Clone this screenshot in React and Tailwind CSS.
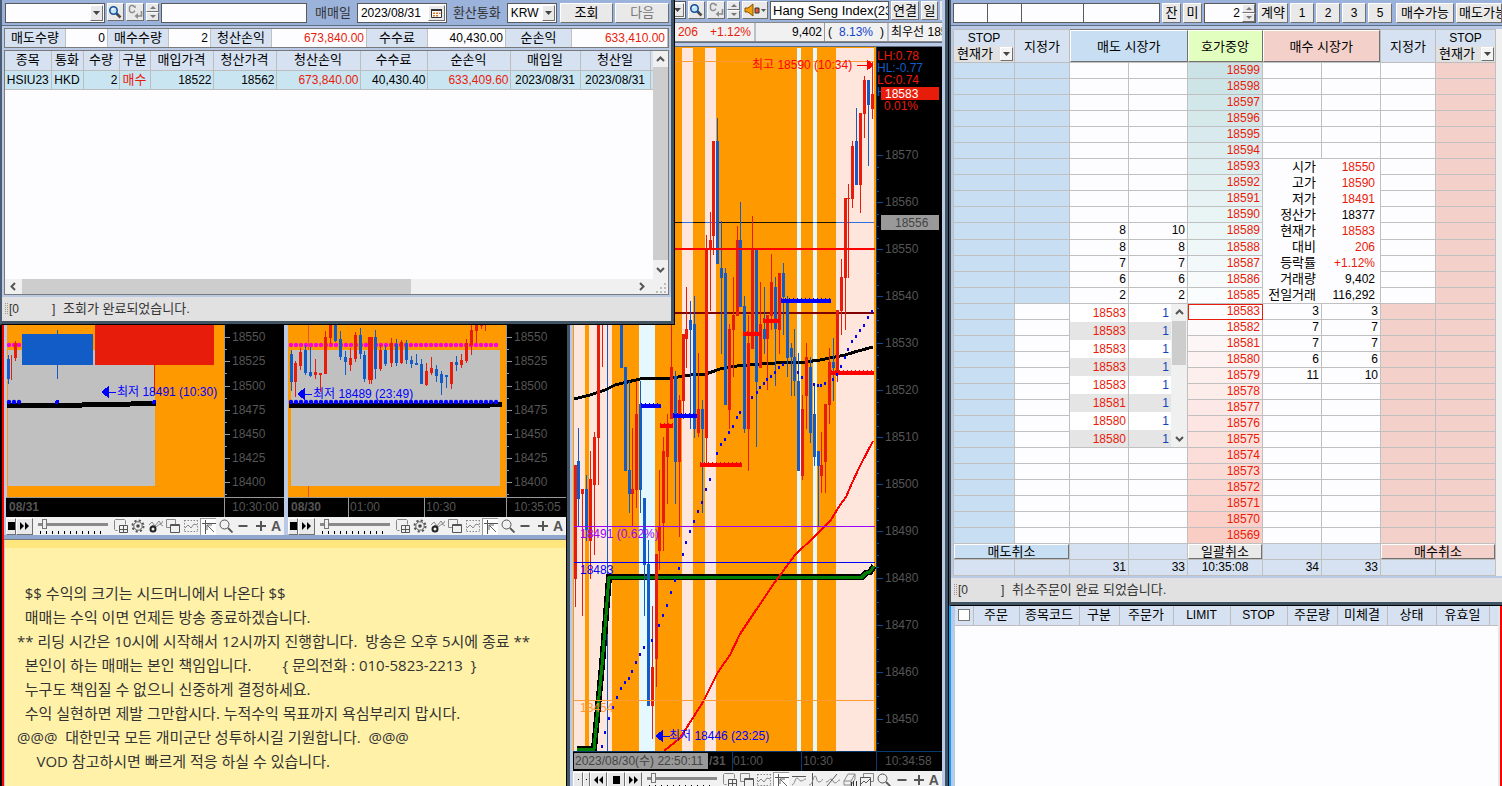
import { Fragment } from 'react';

const RED = '#e81c0a';
const BLUE = '#125cc8';

// [x, high, low, bodyTop, bodyBottom, up]
const MAIN_CANDLES = [
  [575, 465, 607, 465, 579, 1], [578, 428, 526, 461, 499, 0], [582, 489, 616, 489, 494, 1],
  [586, 475, 541, 489, 530, 0], [590, 451, 579, 479, 541, 1], [594, 432, 555, 437, 485, 1],
  [598, 300, 485, 300, 438, 1], [602, 300, 367, 300, 300, 1], [621, 300, 368, 300, 368, 0],
  [625, 367, 471, 367, 471, 0], [629, 381, 513, 470, 494, 0], [632, 428, 527, 489, 494, 1],
  [636, 381, 508, 414, 490, 1], [640, 381, 513, 404, 490, 0], [644, 498, 616, 498, 565, 0],
  [648, 540, 706, 564, 706, 0], [652, 606, 739, 667, 706, 1], [656, 554, 687, 554, 659, 1],
  [659, 470, 570, 526, 551, 1], [663, 437, 551, 451, 523, 1], [667, 414, 504, 426, 457, 1],
  [671, 310, 419, 367, 419, 1], [675, 371, 504, 376, 462, 0], [679, 395, 537, 400, 462, 1],
  [683, 334, 419, 334, 401, 1], [686, 287, 368, 329, 339, 1], [690, 301, 429, 320, 330, 0],
  [694, 296, 438, 324, 429, 0], [698, 353, 437, 409, 433, 1], [702, 400, 513, 409, 429, 0],
  [706, 235, 463, 249, 438, 1], [710, 212, 311, 240, 249, 1], [713, 141, 255, 141, 236, 1],
  [717, 118, 264, 141, 264, 0], [721, 221, 354, 268, 278, 0], [725, 268, 405, 273, 405, 0],
  [729, 324, 429, 329, 410, 1], [733, 277, 377, 315, 330, 1], [737, 226, 316, 240, 316, 1],
  [740, 202, 307, 240, 307, 0], [744, 296, 433, 306, 429, 0], [748, 315, 471, 343, 429, 1],
  [752, 216, 349, 249, 349, 1], [756, 249, 447, 249, 382, 0], [760, 282, 368, 324, 368, 1],
  [764, 287, 354, 329, 339, 0], [767, 315, 390, 315, 339, 1], [771, 254, 330, 282, 316, 1],
  [775, 277, 386, 287, 329, 0], [779, 273, 354, 273, 330, 1], [783, 263, 335, 273, 297, 0],
  [787, 296, 377, 301, 358, 0], [791, 343, 396, 348, 357, 0], [794, 329, 396, 357, 381, 0],
  [798, 353, 471, 381, 471, 0], [802, 395, 480, 409, 476, 1], [806, 343, 429, 357, 396, 1],
  [810, 357, 443, 367, 433, 0], [814, 384, 466, 414, 457, 0], [818, 451, 526, 451, 466, 0],
  [821, 432, 493, 465, 476, 1], [825, 404, 493, 404, 462, 1], [829, 348, 424, 362, 405, 1],
  [833, 338, 401, 362, 368, 0], [837, 310, 382, 310, 375, 1], [841, 259, 335, 277, 311, 1],
  [845, 198, 330, 198, 278, 1], [848, 184, 278, 198, 199, 1], [852, 141, 208, 146, 199, 1],
  [856, 108, 185, 141, 185, 0], [860, 113, 213, 113, 185, 1], [864, 76, 138, 80, 114, 1],
  [868, 80, 166, 80, 105, 0], [872, 62, 119, 94, 109, 1],
];

const BANDS = [
  [574, 11, 'p'], [589, 23, 'p'], [639, 16, 'c'], [682, 11, 'p'], [705, 11, 'p'],
  [797, 4, 'c'], [813, 4, 'c'], [836, 38, 'p'],
];

const SAR = [
  [602, 746], [605, 732], [609, 718], [613, 707], [617, 697], [621, 688], [625, 682], [629, 678],
  [632, 671], [636, 662], [640, 654], [644, 647], [652, 640], [659, 625], [663, 615], [667, 605],
  [671, 592], [675, 580], [679, 568], [683, 554], [686, 542], [690, 531], [694, 521], [698, 511],
  [702, 502], [706, 489], [710, 479], [717, 453], [721, 444], [725, 439], [729, 432], [733, 426],
  [737, 417], [740, 412], [752, 397], [757, 392], [760, 387], [764, 383], [767, 379], [771, 376],
  [775, 372], [779, 367], [783, 364], [798, 372], [802, 377], [814, 384], [818, 385], [821, 385],
  [825, 383], [833, 379], [837, 374], [841, 366], [845, 357], [848, 349], [852, 341], [856, 336],
  [860, 330], [864, 325], [868, 317], [872, 311],
];

const LEVELS = [
  [641, 661, 406, 'b'], [660, 673, 426, 'r'], [673, 697, 416, 'b'], [700, 742, 465, 'r'],
  [743, 761, 334, 'r'], [763, 780, 321, 'r'], [781, 831, 301, 'b'], [831, 874, 373, 'r'],
];

const SUB_CANDLES = [
  [291, 350, 391, 354, 382, 0], [295, 361, 397, 363, 382, 1], [300, 348, 370, 352, 366, 1],
  [305, 345, 375, 350, 373, 0], [310, 347, 377, 372, 376, 0], [315, 359, 379, 372, 375, 1],
  [320, 373, 392, 373, 375, 1], [325, 331, 374, 337, 374, 1], [330, 310, 344, 310, 338, 1],
  [335, 310, 342, 310, 341, 0], [340, 331, 360, 339, 357, 0], [345, 351, 375, 357, 362, 0],
  [350, 348, 371, 358, 365, 1], [355, 332, 362, 335, 359, 1], [360, 328, 359, 335, 354, 0],
  [364, 351, 382, 355, 379, 0], [369, 337, 384, 337, 380, 1], [371, 337, 384, 337, 380, 1],
  [375, 330, 379, 337, 369, 0], [380, 345, 371, 350, 369, 1], [385, 345, 366, 350, 364, 0],
  [391, 338, 367, 343, 363, 1], [396, 339, 366, 344, 363, 0], [401, 340, 364, 342, 363, 1],
  [406, 340, 364, 343, 360, 0], [411, 356, 368, 360, 364, 0], [416, 354, 365, 363, 365, 0],
  [421, 359, 384, 364, 384, 0], [426, 363, 386, 371, 385, 1], [431, 357, 375, 368, 373, 1],
  [436, 365, 382, 369, 376, 0], [441, 371, 395, 374, 383, 0], [446, 375, 388, 375, 377, 0],
  [451, 362, 389, 362, 384, 1], [456, 356, 371, 362, 365, 0], [461, 354, 368, 360, 365, 1],
  [466, 339, 363, 343, 361, 1], [471, 310, 355, 330, 345, 1], [476, 310, 343, 310, 331, 1],
  [481, 310, 329, 310, 326, 1], [485, 310, 331, 310, 320, 1],
];

const SUB_AXIS = [[18550, 337], [18525, 361], [18500, 386], [18475, 410], [18450, 434], [18425, 458], [18400, 482]];

const UPPER = Array.from({ length: 15 }, (_, i) => 18599 - i);
const LOWER = Array.from({ length: 15 }, (_, i) => 18583 - i);
const SELL = { 18589: [8, 10], 18588: [8, 8], 18587: [7, 7], 18586: [6, 6], 18585: [2, 2] };
const BUY = { 18583: [3, 3], 18582: [7, 7], 18581: [7, 7], 18580: [6, 6], 18579: [11, 10] };
const INFO = [
  ['시가', '18550', 1], ['고가', '18590', 1], ['저가', '18491', 1], ['정산가', '18377', 0],
  ['현재가', '18583', 1], ['대비', '206', 1], ['등락률', '+1.12%', 1], ['거래량', '9,402', 0],
  ['전일거래', '116,292', 0],
];
const TICKS = [18583, 18583, 18583, 18583, 18583, 18581, 18580, 18580];

const NOTES = [
  '  $$ 수익의 크기는 시드머니에서 나온다 $$',
  '  매매는 수익 이면 언제든 방송 종료하겠습니다.',
  '** 리딩 시간은 10시에 시작해서 12시까지 진행합니다.  방송은 오후 5시에 종료 **',
  '  본인이 하는 매매는 본인 책임입니다.        { 문의전화 : 010-5823-2213  }',
  '  누구도 책임질 수 없으니 신중하게 결정하세요.',
  '  수익 실현하면 제발 그만합시다. 누적수익 목표까지 욕심부리지 맙시다.',
  '@@@  대한민국 모든 개미군단 성투하시길 기원합니다.  @@@',
  '     VOD 참고하시면 빠르게 적응 하실 수 있습니다.',
];

const EDGE = 'shrink-0 border border-t-white border-l-white border-r-[#707070] border-b-[#707070] overflow-hidden whitespace-nowrap';
const RAISED = `${EDGE} bg-[#e9e9e9]`;
const FIELD = 'border border-[#5a5a5a] bg-[#fdfdff] min-w-0';

function Candles({ data }) {
  return data.map(([x, hi, lo, top, bot, up], i) => (
    <g key={i} fill={up ? RED : BLUE}>
      <rect x={x} y={hi} width="1" height={lo - hi} />
      <rect x={x - 1} y={top} width="3" height={bot - top} />
    </g>
  ));
}

function Down() {
  return (
    <svg viewBox="0 0 7 4" className="w-[7px] h-1" fill="#444">
      <path d="M0 0h7L3.500 4z" />
    </svg>
  );
}

function DropDown({ label, options, className, button = 'bg-[#e9e9e9]' }) {
  return (
    <div className={`relative flex shrink-0 ${className}`}>
      <select aria-label={label} className="w-full h-full appearance-none pl-[3px] pr-3 bg-transparent outline-none">
        {options.map((o) => <option key={o}>{o}</option>)}
      </select>
      <span className={`absolute right-px top-px bottom-px flex items-center justify-center pointer-events-none w-[13px] ${EDGE} ${button}`}>
        <Down />
      </span>
    </div>
  );
}

function SearchButton() {
  return (
    <button aria-label="검색" className={`w-[17px] h-[18px] ${RAISED}`}>
      <svg viewBox="0 0 14 14" className="w-[14px] h-[14px]">
        <circle cx="5.500" cy="5.500" r="3.700" fill="#bfe6f8" stroke="#1b4f96" strokeWidth="1.600" />
        <path d="M4 4.500L6 3.500" stroke="#fff" strokeWidth="1.200" />
        <path d="M8.500 8.500L12.500 12.500" stroke="#5b4a3a" strokeWidth="2.600" />
        <path d="M8.500 8.500L10 10" stroke="#1b4f96" strokeWidth="2" />
      </svg>
    </button>
  );
}

function ClearButton() {
  return (
    <button aria-label="이전 종목" className={`w-[18px] h-[18px] ${RAISED}`}>
      <svg viewBox="0 0 16 16" className="w-4 h-4" fill="none" stroke="#8c8c8c">
        <path d="M8 4V2.500H7L6 1.500H4L2.500 3v4L4 8.500h2L7.500 7.500V6.500" strokeWidth="1.400" />
        <path d="M14.500 7v5H10" strokeWidth="1.600" />
        <path d="M11 9v6L7.500 12z" fill="#8c8c8c" stroke="none" />
      </svg>
    </button>
  );
}

function Spin() {
  return (
    <span className="flex flex-col shrink-0 w-[13px] h-[18px]">
      {['위로', '아래로'].map((name, i) => (
        <button key={name} aria-label={name} className={`flex flex-1 items-center justify-center ${RAISED}`}>
          <svg viewBox="0 0 6 3" className="w-[6px] h-[3px]" fill="#777">
            <path d={i ? 'M0 0h6L3 3z' : 'M0 3h6L3 0z'} />
          </svg>
        </button>
      ))}
    </span>
  );
}

const ICONS = {
  addWindow: <><path d="M3.500 11.500h-2l-1-1V1.500l1-1h9l1 1v4" /><path d="M5.500 6.500h8v7h-8zM9.500 6.500v7M5.500 10.500h8" stroke="#555" /></>,
  gear: <><circle cx="7" cy="7" r="5.500" strokeWidth="2" strokeDasharray="2.160 2.160" stroke="#555" /><circle cx="7" cy="7" r="4.200" stroke="#666" /><circle cx="7" cy="7" r="1" strokeWidth="1.600" stroke="#444" /></>,
  chartGear: <><path d="M0 6l3-3 3 4 4-5 2 3 2-3M1 9l3-3 3 2 4-3 3 2" /><circle cx="4" cy="10" r="2.500" stroke="#222" strokeWidth="2" /></>,
  windows: <><path d="M4 8.500H.5v-8h9V5" /><path d="M4.500 5.500h9v8h-9zM4.500 6.500h9" stroke="#555" /></>,
  frame: <><path d="M.5 1.500h13M.5 12.500h13M.5 1v12M13.500 1v12" strokeDasharray="1.500 1.500" /><path d="M1 9l3-3 3 3 3-4 3 1" /></>,
  cursor: <><path d="M3.500 0v14M0 3.500h14" stroke="#555" /><path d="M12 12L5 5M5 10V5h5" stroke="#666" /></>,
  ceiling: <><path d="M0 3.500h14" stroke="#555" /><path d="M0 12c3-1 3-7 5-7s2 3 4 3 3-2 5-2" /></>,
  vline: <><path d="M3.500 0v14" stroke="#555" /><path d="M0 12c4 0 4-9 6-9s1 6 4 6 3-3 4-3" /></>,
  pen: <><path d="M1 13L11 1" stroke="#555" /><path d="M0 9c3 0 3-3 5-3s2 4 4 4 3-3 5-3" /></>,
  eraser: <><path d="M1 8l4-7h7L8 8zM1 8v4h7V8M8 12l4-6V1" /><path d="M8.500 9v5M10.500 8v6M13.500 8v6" stroke="#333" /></>,
  stack: <><path d="M3.500 4V.5h10v8H11" /><path d="M.5 4.500h10v9H.5z" stroke="#555" /><path d="M1 11l3-3 2 2 4-4" stroke="#555" /></>,
  zoom: <><circle cx="5.500" cy="5.500" r="4.500" stroke="#555" /><path d="M9 9l4.500 4.500" stroke="#555" strokeWidth="1.800" /></>,
  minus: <path d="M2.500 7h9" stroke="#555" strokeWidth="2" />,
  plus: <path d="M2 7h10M7 2v10" stroke="#555" strokeWidth="2" />,
};
const SUB_TOOLS = ['addWindow', 'gear', 'chartGear', 'windows', 'frame', 'cursor', 'zoom', 'minus', 'plus'];
const MAIN_TOOLS = ['addWindow', 'windows', 'frame', 'cursor', 'ceiling', 'vline', 'pen', 'eraser', 'stack', 'zoom', 'minus', 'plus'];

function PlayButton({ name, d, className }) {
  return (
    <button aria-label={name} className={`flex items-center justify-center h-[17px] ${RAISED} ${className}`}>
      <svg viewBox="0 0 9 8" className="w-[9px] h-2 shrink-0"><path d={d} /></svg>
    </button>
  );
}

function ChartTools({ tools, full }) {
  return (
    <div className="flex items-center h-[18px] bg-[#f1f1f1] pr-[2px]">
      {full && (
        <>
          <PlayButton name="처음" d="M4 3h1v1H4z" className="w-[10px]" />
          <PlayButton name="이전" d="M4 3h1v1H4z" className="w-[7px]" />
          <PlayButton name="되감기" d="M4 0v8L0 4zM9 0v8L5 4z" className="w-[17px]" />
        </>
      )}
      <PlayButton name="정지" d="M1 0h7v8H1z" className={full ? 'w-[18px]' : 'w-[10px]'} />
      <PlayButton name="빨리 감기" d="M0 0v8l4-4zM5 0v8l4-4z" className="w-[17px]" />
      <div className="flex flex-col mx-[5px] w-[70px] shrink-0">
        <input
          type="range"
          aria-label="재생 속도"
          defaultValue="6"
          className="appearance-none w-full h-3 bg-transparent [&::-webkit-slider-runnable-track]:h-[3px] [&::-webkit-slider-runnable-track]:bg-[#8a8a8a] [&::-webkit-slider-thumb]:appearance-none [&::-webkit-slider-thumb]:w-[5px] [&::-webkit-slider-thumb]:h-[10px] [&::-webkit-slider-thumb]:-mt-1 [&::-webkit-slider-thumb]:bg-[#f0f0f0] [&::-webkit-slider-thumb]:border [&::-webkit-slider-thumb]:border-[#777]"
        />
        <svg viewBox="0 0 70 3" className="h-[3px] w-full">
          {Array.from({ length: 11 }, (_, i) => <rect key={i} x={2 + i * 6} y="0" width="1" height="3" />)}
        </svg>
      </div>
      <div className="flex flex-1 justify-between items-center text-[#555]">
        {tools.map((name) => (
          <button key={name} aria-label={name} className={`flex items-center justify-center w-4 h-[17px] ${name === 'cursor' ? 'bg-white border-l border-t border-[#999]' : ''}`}>
            <svg viewBox="0 0 14 14" className="w-[14px] h-[14px] shrink-0" fill="none" stroke="#888">{ICONS[name]}</svg>
          </button>
        ))}
        <button aria-label="글자" className="w-3 font-bold text-sm leading-[17px]">A</button>
      </div>
    </div>
  );
}

function SubAxis({ x, clock }) {
  return (
    <>
      <rect x={x} y="0" width="62" height="517" fill="#000" />
      <rect x={x} y="0" width="1" height="517" fill="#999" />
      {SUB_AXIS.map(([v, y]) => (
        <Fragment key={v}>
          <rect x={x} y={y} width="6" height="1" fill="#999" />
          <rect x={x} y={y + 12} width="3" height="1" fill="#999" />
          <text x={x + 8} y={y + 4} fill="#555">{v}</text>
        </Fragment>
      ))}
      <rect x={x - 220} y="498" width="220" height="19" fill="#000" />
      <rect x={x - 220} y="497" width="282" height="1" fill="#999" />
      <rect x={x} y="498" width="1" height="19" fill="#999" />
      <text x={x + 8} y="511" fill="#555">{clock}</text>
    </>
  );
}

function Arrow({ x, y, color, right }) {
  return (
    <path
      d={right ? `M${x} ${y}h10v-5l6 5l-6 5v-5` : `M${x} ${y}l6 -5v10l-6 -5h14`}
      fill={color}
      stroke={color}
    />
  );
}

function Dots({ from, to, y, color }) {
  const xs = [];
  for (let x = from; x <= to; x += 5) xs.push(x);
  return xs.map((x) => <circle key={x} cx={x} cy={y} r="2.200" fill={color} shapeRendering="auto" />);
}

function SubCharts() {
  return (
    <div className="flex gap-1 pl-[2px]">
      <section className="flex-1 min-w-0">
        <svg viewBox="6 0 278 517" className="block w-full h-[517px] text-xs" preserveAspectRatio="xMinYMin slice" shapeRendering="crispEdges">
          <rect x="7" width="220" height="517" fill="#ff9900" />
          <rect x="8" y="350" width="147" height="136" fill="#c0c0c0" />
          <Dots from={9} to={19} y={345} color="#ff00dc" />
          <Candles data={[[8, 355, 384, 359, 379, 0], [11, 355, 380, 355, 355, 1], [15, 341, 361, 343, 358, 1]]} />
          <rect x="57" y="330" width="1" height="49" fill={BLUE} />
          <rect x="22" y="334" width="71" height="31" fill={BLUE} />
          <rect x="154" y="300" width="1" height="95" fill={RED} />
          <rect x="95" y="300" width="119" height="65" fill={RED} />
          <path d="M7 405H82L131 404L156 403" stroke="#000" strokeWidth="5" fill="none" />
          <Dots from={9} to={19} y={402} color="#00f" />
          <circle cx="57" cy="402" r="2" fill="#00f" />
          <circle cx="154" cy="402" r="2" fill="#00f" />
          <Arrow x={102} y={392} color="#00f" />
          <text x="117" y="396" fill="#00f">최저 18491 (10:30)</text>
          <SubAxis x={224} clock="10:30:00" />
          <text x="9" y="511" fill="#555" className="font-bold">08/31</text>
        </svg>
        <ChartTools tools={SUB_TOOLS} />
      </section>
      <section className="flex-1 min-w-0">
        <svg viewBox="288 0 278 517" className="block w-full h-[517px] text-xs" preserveAspectRatio="xMinYMin slice" shapeRendering="crispEdges">
          <rect x="288" width="220" height="517" fill="#ff9900" />
          <rect x="308" width="1" height="497" fill="#e8552a" />
          <rect x="291" y="350" width="209" height="136" fill="#c0c0c0" />
          <Dots from={291} to={500} y={345} color="#ff00dc" />
          <Candles data={SUB_CANDLES} />
          <path d="M289 405H490L502 404" stroke="#000" strokeWidth="5" fill="none" />
          <Dots from={291} to={500} y={402} color="#00f" />
          <Arrow x={298} y={394} color="#00f" />
          <text x="313" y="398" fill="#00f">최저 18489 (23:49)</text>
          <SubAxis x={506} clock="10:35:05" />
          <rect x="348" y="498" width="1" height="19" fill="#999" />
          <rect x="424" y="498" width="1" height="19" fill="#999" />
          <text x="291" y="511" fill="#555" className="font-bold">08/30</text>
          <text x="350" y="511" fill="#555">01:00</text>
          <text x="426" y="511" fill="#555">10:30</text>
        </svg>
        <ChartTools tools={SUB_TOOLS} />
      </section>
    </div>
  );
}

function LeftColumn() {
  return (
    <div className="flex flex-col min-w-0 border-l-2 border-r border-black bg-[#f00]">
      <div className="flex flex-col flex-1 ml-[2px] bg-[#b9c9e6] overflow-hidden">
        <SubCharts />
        <div className="h-[5px] bg-[#8fa6cf] border-b border-[#777]" />
        <article className="flex-1 ml-px border-t-8 border-[#ffe67d] bg-[#fff1a8] px-[12px] pt-[33px] text-[15px] leading-6 text-[#333] whitespace-pre font-['Open_Sans','Noto_Sans_CJK_KR',sans-serif]">
          {NOTES.map((line) => <p key={line}>{line}</p>)}
        </article>
      </div>
    </div>
  );
}

function MainChart() {
  const prices = Array.from({ length: 13 }, (_, i) => 18570 - i * 10);
  return (
    <svg viewBox="573 47 369 724" className="block w-full h-[724px] text-xs" preserveAspectRatio="xMinYMin slice" shapeRendering="crispEdges">
      <rect x="573" y="47" width="303" height="705" fill="#ff9900" />
      {BANDS.map(([x, w, c]) => <rect key={x} x={x} y="48" width={w} height="703" fill={c === 'p' ? '#ffe6dc' : '#e6f8ff'} />)}
      <rect x="574" y="61" width="300" height="1" fill="#ff9933" />
      <rect x="574" y="222" width="300" height="1" fill="#111" />
      {BANDS.map(([x, w]) => <rect key={x} x={x} y="222" width={w} height="1" fill="#2f6fe0" />)}
      <rect x="607" y="300" width="1" height="451" fill={BLUE} />
      <polyline points="577,749 594,749 602,665 609,577 862,577 866,573 870,572 874,566" fill="none" stroke="#000" strokeWidth="6" />
      <polyline points="577,749 594,749 602,665 609,577 862,577 866,573 870,572 874,566" fill="none" stroke="#008000" strokeWidth="3" />
      <polyline points="574,399 590,395 605,390 615,385 640,379 672,378 690,375 706,374 720,369 737,366 760,364 790,362 805,362 820,360 835,357 845,355 858,351 873,347" fill="none" stroke="#000" strokeWidth="3" />
      <rect x="574" y="312" width="300" height="2" fill="#800000" />
      <Candles data={MAIN_CANDLES} />
      <rect x="574" y="248" width="301" height="2" fill="#f00" />
      {LEVELS.map(([a, b, y, c]) => (
        <g key={a} stroke={c === 'b' ? '#00f' : '#f00'}>
          <line x1={a} x2={b} y1={y} y2={y} strokeWidth="4" />
          <line x1={a} x2={b} y1={y - 2} y2={y - 2} strokeWidth="2" strokeDasharray="1 3" />
        </g>
      ))}
      {SAR.map(([x, y]) => <rect key={x} x={x - 1} y={y - 1} width="2" height="3" fill="#00f" />)}
      <polyline points="664,751 680,738 703,702 718,672 730,655 740,634 752,616 775,582 795,555 814,537 831,520 838,508 846,497 852,483 860,466 873,441" fill="none" stroke="#f00" strokeWidth="2" />
      <rect x="574" y="526" width="301" height="1" fill="#9900ff" />
      <rect x="574" y="562" width="301" height="1" fill="#00f" />
      <rect x="574" y="700" width="301" height="1" fill="#ff9933" />
      <text x="580" y="538" fill="#9900ff">18491 (0.62%)</text>
      <text x="580" y="574" fill="#00f">18483</text>
      <text x="580" y="712" fill="#ff9933">18454</text>
      <text x="752" y="69" fill="#f00">최고 18590 (10:34)</text>
      <Arrow x={857} y={65} color="#f00" right />
      <Arrow x={656} y={736} color="#00f" />
      <text x="669" y="740" fill="#00f">최저 18446 (23:25)</text>

      <rect x="876" y="47" width="66" height="724" fill="#000" />
      <rect x="876" y="47" width="1" height="724" fill="#0a3a70" />
      {prices.map((p, i) => (
        <Fragment key={p}>
          <rect x="877" y={155 + i * 47} width="6" height="1" fill="#0a4a90" />
          {[1, 2, 3].map((n) => <rect key={n} x="877" y={155 + i * 47 + n * 12} width="2" height="1" fill="#0a4a90" />)}
          <text x="885" y={159 + i * 47} fill="#555">{p}</text>
        </Fragment>
      ))}
      <text x="877" y="60" fill={RED}>LH:0.78</text>
      <text x="877" y="72" fill={BLUE}>HL:-0.77</text>
      <text x="877" y="84" fill={RED}>LC:0.74</text>
      <text x="877" y="96" fill={BLUE}>H</text>
      <rect x="881" y="87" width="58" height="13" fill={RED} />
      <text x="885" y="98" fill="#fff">18583</text>
      <text x="884" y="110" fill={RED}>0.01%</text>
      <rect x="881" y="215" width="58" height="15" fill="#999" />
      <text x="895" y="227" fill="#444">18556</text>

      <rect x="573" y="751" width="369" height="20" fill="#000" />
      <rect x="573" y="751" width="369" height="1" fill="#0a3a70" />
      {[732, 801, 876].map((x) => <rect key={x} x={x} y="751" width="1" height="20" fill="#0a3a70" />)}
      <text x="709" y="765" fill="#555" className="font-bold">/31</text>
      <rect x="574" y="753" width="134" height="16" fill="#999" />
      <text x="575" y="765" fill="#444">2023/08/30(수) 22:50:11</text>
      <text x="733" y="765" fill="#555">01:00</text>
      <text x="803" y="765" fill="#555">10:30</text>
      <text x="885" y="765" fill="#555">10:34:58</text>
    </svg>
  );
}

function ChartWindow() {
  return (
    <div className="min-w-0 border-x-3 border-[#415463] bg-[#b9c9e6] px-[3px] overflow-hidden">
      <div className="flex items-start h-[22px] bg-[#9bb2db] pt-px gap-[2px] overflow-hidden">
        <DropDown label="종목코드" options={['']} className={`w-[113px] h-[18px] ${FIELD}`} />
        <SearchButton />
        <ClearButton />
        <Spin />
        <button aria-label="소리" className={`flex items-center justify-center w-[26px] h-[18px] ${RAISED}`}>
          <svg viewBox="0 0 22 14" className="w-[22px] h-[14px] shrink-0">
            <path d="M1 5h3l5-4v12L4 9H1z" fill="#f0a010" stroke="#8a5200" />
            <path d="M11 5h4v5h-4z" fill="#e85a20" stroke="#333" />
            <path d="M17 6h5l-2.500 3z" fill="#555" />
          </svg>
        </button>
        <input aria-label="종목명" readOnly defaultValue="Hang Seng Index(23.09)" className={`flex-1 h-[19px] pl-[2px] ${FIELD}`} />
        <button className={`w-7 h-[19px] leading-[18px] ${RAISED}`}>연결</button>
        <button className={`w-[17px] h-[19px] leading-[18px] ${RAISED}`}>일</button>
        <span className="w-[2px] h-[19px] bg-[#e9e9e9]" />
      </div>
      <div className="flex h-5 border-y border-[#888] bg-[#f1f1f1] text-xs leading-[18px] whitespace-nowrap">
        <div className="flex-1 flex justify-end gap-3 pr-[3px] text-[#e81c0a] border-r-2 border-[#b9bfcc]"><span>206</span><span>+1.12%</span></div>
        <div className="w-[69px] text-right pr-[2px] border-r border-[#999]">9,402</div>
        <div className="w-[62px] flex justify-between px-[3px]"><span>(</span><span className="text-[#1144cc]">8.13%</span><span>)</span></div>
        <div className="w-[55px] pl-[2px] border-l-2 border-[#b9bfcc] overflow-hidden">최우선 18583</div>
      </div>
      <div className="h-[5px] bg-[#b9c9e6] border-y border-[#5d6d84]" />
      <MainChart />
      <ChartTools tools={MAIN_TOOLS} full />
    </div>
  );
}

const HISTORY_COLS = [
  ['종목', 'w-[46px]', 'HSIU23', 'text-xs text-center'], ['통화', 'w-[32px]', 'HKD', 'text-xs text-center'],
  ['수량', 'w-[36px]', '2', 'text-xs text-right'], ['구분', 'w-[31px]', '매수', 'text-center text-[#e81c0a]'],
  ['매입가격', 'w-[63px]', '18522', 'text-xs text-right'], ['청산가격', 'w-[63px]', '18562', 'text-xs text-right'],
  ['청산손익', 'w-[84px]', '673,840.00', 'text-xs text-right text-[#e81c0a]'], ['수수료', 'w-[67px]', '40,430.40', 'text-xs text-right'],
  ['순손익', 'w-[83px]', '633,409.60', 'text-xs text-right text-[#e81c0a]'], ['매입일', 'w-[70px]', '2023/08/31', 'text-xs text-center'],
  ['청산일', 'w-[70px]', '2023/08/31', 'text-xs text-center'],
];

const SUMMARY = [
  ['매도수량', 'w-[60px]', '0', 'w-[43px]'], ['매수수량', 'w-[60px]', '2', 'w-[43px]'],
  ['청산손익', 'w-[60px]', '673,840.00', 'w-[96px] text-[#e81c0a]'],
  ['수수료', 'w-[60px]', '40,430.00', 'w-[79px]'], ['순손익', 'w-[65px]', '633,410.00', 'flex-1 text-[#e81c0a]'],
];

function Chevron({ dir }) {
  const d = { up: 'M1 6l3.500-3.500L8 6', down: 'M1 3l3.500 3.500L8 3', left: 'M6 1L2.500 4.500L6 8', right: 'M3 1l3.500 3.500L3 8' }[dir];
  return <svg viewBox="0 0 9 9" className="w-[9px] h-[9px]" fill="none" stroke="#555" strokeWidth="2"><path d={d} /></svg>;
}

function HistoryWindow() {
  return (
    <section className="absolute left-0 top-0 w-[675px] bg-[#b9c9e6] border-l-2 border-l-[#4a5d73] border-r border-b border-black">
      <div className="border-r-3 border-b-3 border-[#415463]">
        <div className="flex items-start gap-[2px] h-[26px] bg-[#9bb2db] border-b border-[#5d6d84] pt-[3px] pl-[3px] pr-[2px]">
          <DropDown label="계좌" options={['']} className={`w-[100px] h-5 ${FIELD}`} />
          <SearchButton />
          <ClearButton />
          <Spin />
          <input aria-label="종목명" className={`w-[146px] h-5 ${FIELD}`} />
          <label htmlFor="tradeDate" className="ml-[6px] mr-1 leading-5 text-[#333]">매매일</label>
          <div className={`flex shrink-0 w-[90px] h-5 p-px ${FIELD}`}>
            <input id="tradeDate" defaultValue="2023/08/31" className="w-full min-w-0 pl-[2px] text-xs outline-none" />
            <button aria-label="달력" className={`w-[17px] flex items-center justify-center ${RAISED}`}>
              <svg viewBox="0 0 11 10" className="w-[11px] h-[10px] shrink-0">
                <path d="M.5 1.500h10v8H.5z" fill="#fff" stroke="#333" />
                <path d="M0 1h11v2H0z" fill="#333" />
                <path d="M2 4.500h2v1.500H2zM5 4.500h2v1.500H5zM8 4.500h1.500v1.500H8zM2 7h2v1.500H2zM5 7h2v1.500H5z" fill="#e87020" />
              </svg>
            </button>
          </div>
          <span className="mx-1 leading-5 text-[#333]">환산통화</span>
          <DropDown label="환산통화" options={['KRW']} className={`w-[50px] h-5 text-xs ${FIELD}`} />
          <button className={`flex-1 ml-px h-5 leading-[18px] ${RAISED}`}>조회</button>
          <button className={`flex-1 h-5 leading-[18px] text-[#777] ${RAISED}`}>다음</button>
        </div>
        <div className="px-[2px] pt-[2px]">
          <dl className="flex h-5 border border-[#7a7a7a] bg-[#d6e2f1] leading-[18px]">
            {SUMMARY.map(([k, kw, v, vw]) => (
              <Fragment key={k}>
                <dt className={`text-center ${kw}`}>{k}</dt>
                <dd className={`text-xs leading-[18px] text-right pr-[2px] bg-[#fdfdff] border-x border-[#c0c0c0] ${vw}`}>{v}</dd>
              </Fragment>
            ))}
          </dl>
          <div className="mt-[2px] border border-[#7a7a7a] bg-[#fdfdff]">
            <div className="flex h-[228px]">
              <div className="flex-1 min-w-0">
                <table className="w-full table-fixed border-collapse">
                  <thead>
                    <tr className="h-[19px] bg-[#d6e2f1]">
                      {HISTORY_COLS.map(([h, w]) => <th key={h} className={`p-0 leading-[18px] font-normal border-r border-b border-[#bdbdbd] whitespace-nowrap ${w}`}>{h}</th>)}
                      <th className="p-0 border-b border-[#bdbdbd]" />
                    </tr>
                  </thead>
                  <tbody>
                    <tr className="h-[19px] bg-[#c9e5f1]">
                      {HISTORY_COLS.map(([h, , v, cls]) => <td key={h} className={`py-0 px-px border-r border-b border-[#bdbdbd] ${cls} leading-[18px]`}>{v}</td>)}
                      <td className="p-0 border-b border-[#bdbdbd]" />
                    </tr>
                  </tbody>
                </table>
              </div>
              <div className="flex flex-col w-[15px] bg-[#f0f0f0]">
                <div className="flex h-4 items-center justify-center"><Chevron dir="up" /></div>
                <div className="flex-1 bg-[#cdcdcd]" />
                <div className="flex h-[19px] items-center justify-center"><Chevron dir="down" /></div>
              </div>
            </div>
            <div className="flex h-[15px] bg-[#f0f0f0]">
              <div className="flex w-[17px] items-center justify-center"><Chevron dir="left" /></div>
              <div className="w-[389px] bg-[#cdcdcd]" />
              <div className="flex flex-1 items-center justify-end pr-[5px]"><Chevron dir="right" /></div>
              <svg viewBox="0 0 17 15" className="w-[17px] h-[15px]" fill="#bbb">
                <path d="M13 4h2v2h-2zM9 8h2v2H9zM13 8h2v2h-2zM5 12h2v2H5zM9 12h2v2H9zM13 12h2v2h-2z" />
              </svg>
            </div>
          </div>
        </div>
        <StatusBar>조회가 완료되었습니다.</StatusBar>
      </div>
    </section>
  );
}

function StatusBar({ children }) {
  return (
    <div className="flex items-center h-6 mt-[2px] pl-[3px] bg-[#e1e1e1] text-[#333] whitespace-pre">
      <svg viewBox="0 0 4 12" className="w-1 h-3" fill="#999">
        <path d="M0 0h1v1H0zM2 0h1v1H2zM0 2h1v1H0zM2 2h1v1H2zM0 4h1v1H0zM2 4h1v1H2zM0 6h1v1H0zM2 6h1v1H2zM0 8h1v1H0zM2 8h1v1H2zM0 10h1v1H0zM2 10h1v1H2z" />
      </svg>
      <span className="w-[43px] text-xs">[0</span>
      <span className="w-[11px] text-xs">]</span>
      <span>{children}</span>
    </div>
  );
}

function lerp(a, b, t) {
  return `rgb(${a.map((v, i) => Math.round(v + (b[i] - v) * t)).join(',')})`;
}

const TD = 'p-0 pr-[2px] border border-[#c0c0c0] text-right';

function StopHead() {
  return (
    <th className="p-0 font-normal border border-[#bdbdbd] bg-[#d6e2f1]">
      <div className="h-[15px] text-xs leading-[15px]">STOP</div>
      <DropDown label="STOP 기준" options={['현재가']} className="w-full h-4 bg-[#e1e1e1]" button="bg-[#f4f4f4]" />
    </th>
  );
}

function OrderTable() {
  return (
    <table className="w-full table-fixed border-collapse bg-[#fdfdff] text-xs leading-[15px] border border-[#7a7a7a]">
      <colgroup>
        <col className="w-[61px]" /><col className="w-[55px]" /><col className="w-[59px]" /><col className="w-[59px]" /><col className="w-[75px]" />
        <col className="w-[59px]" /><col className="w-[59px]" /><col className="w-[55px]" /><col />
      </colgroup>
      <thead className="text-[13px]">
        <tr className="h-[33px]">
          <StopHead />
          <th className="p-0 font-normal border border-[#bdbdbd] bg-[#d6e2f1]">지정가</th>
          <th colSpan="2" className="p-0 font-normal"><button className={`w-full h-8 bg-[#c7def3] ${EDGE}`}>매도 시장가</button></th>
          <th className="p-0 font-normal"><button className={`w-full h-8 bg-[#e2ffc0] ${EDGE}`}>호가중앙</button></th>
          <th colSpan="2" className="p-0 font-normal"><button className={`w-full h-8 bg-[#f3d0ca] ${EDGE}`}>매수 시장가</button></th>
          <th className="p-0 font-normal border border-[#bdbdbd] bg-[#d6e2f1]">지정가</th>
          <StopHead />
        </tr>
      </thead>
      <tbody className="border-y border-[#7a7a7a]">
        {UPPER.map((p, i) => (
          <tr key={p} className="h-4">
            <td className={`${TD} bg-[#c7def3]`} />
            <td className={`${TD} bg-[#c7def3]`} />
            <td className={TD}>{SELL[p]?.[0]}</td>
            <td className={TD}>{SELL[p]?.[1]}</td>
            <td className={`${TD} text-[#e81c0a]`} style={{ background: lerp([203, 227, 230], [250, 253, 254], i / 14) }}>{p}</td>
            {i < 6 && <><td className={TD} /><td className={TD} /></>}
            {i === 6 && (
              <td colSpan="2" rowSpan="9" className="p-0 border border-[#c0c0c0] align-top">
                <dl className="grid grid-cols-[1fr_auto] gap-x-2 px-[5px] leading-4">
                  {INFO.map(([k, v, up]) => (
                    <Fragment key={k}>
                      <dt className="text-right text-[13px] leading-4">{k}</dt>
                      <dd className={`w-[51px] text-right ${up ? 'text-[#e81c0a]' : ''}`}>{v}</dd>
                    </Fragment>
                  ))}
                </dl>
              </td>
            )}
            <td className={TD} />
            <td className={`${TD} bg-[#f3d0ca]`} />
          </tr>
        ))}
      </tbody>
      <tbody className="border-b border-[#7a7a7a]">
        {LOWER.map((p, i) => (
          <tr key={p} className="h-4">
            <td className={`${TD} bg-[#c7def3]`} />
            <td className={TD} />
            {i === 0 && (
              <td colSpan="2" rowSpan="9" className="p-0 border border-[#c0c0c0] align-top">
                <div className="flex h-[143px]">
                  <ul className="flex-1 overflow-hidden">
                    {TICKS.map((t, n) => (
                      <li key={n} className="flex h-[18px] leading-[18px] text-right odd:bg-white even:bg-[#e5e5e5]">
                        <span className="w-[59px] pr-[2px] border-r border-[#bbb] text-[#e81c0a]">{t}</span>
                        <span className="flex-1 pr-[2px] text-[#1144bb]">1</span>
                      </li>
                    ))}
                  </ul>
                  <div className="flex flex-col w-4 items-center bg-[#f0f0f0]">
                    <div className="flex h-[17px] items-center"><Chevron dir="up" /></div>
                    <div className="w-[14px] h-11 bg-[#cdcdcd]" />
                    <div className="flex flex-1 items-end pb-1"><Chevron dir="down" /></div>
                  </div>
                </div>
              </td>
            )}
            {i > 8 && <><td className={TD} /><td className={TD} /></>}
            <td
              className={`${TD} text-[#e81c0a] ${i === 0 ? 'outline outline-1 -outline-offset-1 outline-[#e81c0a]' : ''}`}
              style={{ background: lerp([253, 253, 255], [250, 205, 196], i / 14) }}
            >
              {p}
            </td>
            <td className={TD}>{BUY[p]?.[0]}</td>
            <td className={TD}>{BUY[p]?.[1]}</td>
            <td className={`${TD} bg-[#f3d0ca]`} />
            <td className={`${TD} bg-[#f3d0ca]`} />
          </tr>
        ))}
      </tbody>
      <tfoot className="bg-[#d6e2f1]">
        <tr className="h-4 text-[13px]">
          <td colSpan="2" className="p-0 border border-[#bdbdbd]"><button className={`block w-full h-[15px] leading-[14px] bg-[#c7def3] ${EDGE}`}>매도취소</button></td>
          <td className={TD} /><td className={TD} />
          <td className="p-0 border border-[#bdbdbd]"><button className={`block w-full h-[15px] leading-[14px] ${RAISED}`}>일괄취소</button></td>
          <td className={TD} /><td className={TD} />
          <td colSpan="2" className="p-0 border border-[#bdbdbd]"><button className={`block w-full h-[15px] leading-[14px] bg-[#f3d0ca] ${EDGE}`}>매수취소</button></td>
        </tr>
        <tr className="h-4">
          <td className={TD} /><td className={TD} />
          <td className={TD}>31</td><td className={TD}>33</td>
          <td className="p-0 border border-[#c0c0c0] text-center">10:35:08</td>
          <td className={TD}>34</td><td className={TD}>33</td>
          <td className={TD} /><td className={TD} />
        </tr>
      </tfoot>
    </table>
  );
}

const ORDER_COLS = [
  ['주문', 'w-[46px]'], ['종목코드', 'w-[60px]'], ['구분', 'w-[40px]'], ['주문가', 'w-[54px]'], ['LIMIT', 'w-[57px] text-xs'],
  ['STOP', 'w-[57px] text-xs'], ['주문량', 'w-[50px]'], ['미체결', 'w-[50px]'], ['상태', 'w-[49px]'], ['유효일', 'w-[53px]'],
];

function RightColumn() {
  return (
    <div className="flex flex-col min-w-0 border-l border-black overflow-hidden">
      <section className="border-l-2 border-b-3 border-[#415463] bg-[#b9c9e6]">
        <div className="flex items-start gap-[2px] h-[26px] bg-[#9bb2db] border-b border-[#5d6d84] pt-[3px] pl-[2px] overflow-hidden">
          <div className="flex flex-1 min-w-0 h-5">
            <input aria-label="계좌번호" className={`w-[35px] h-5 ${FIELD}`} />
            <input aria-label="계좌구분" className={`w-[35px] h-5 -ml-px ${FIELD}`} />
            <input aria-label="비밀번호" className={`w-[63px] h-5 -ml-px ${FIELD}`} />
            <input aria-label="계좌명" className={`flex-1 h-5 -ml-px ${FIELD}`} />
          </div>
          <button className={`w-[19px] h-5 leading-[18px] ${RAISED}`}>잔</button>
          <button className={`w-[19px] h-5 leading-[18px] ${RAISED}`}>미</button>
          <div className={`flex shrink-0 w-[52px] h-5 ${FIELD}`}>
            <input aria-label="주문수량" defaultValue="2" className="w-full min-w-0 text-xs text-right pr-[2px] outline-none" />
            <Spin />
          </div>
          <button className={`w-[30px] h-5 leading-[18px] ${RAISED}`}>계약</button>
          {[1, 2, 3, 5].map((n) => <button key={n} className={`w-6 h-5 text-xs leading-[18px] ${RAISED}`}>{n}</button>)}
          <button className={`w-[58px] ml-[2px] h-5 leading-[18px] ${RAISED}`}>매수가능</button>
          <button className={`w-[46px] h-5 pl-[2px] leading-[18px] text-left ${RAISED}`}>매도가능</button>
        </div>
        <div className="flex pl-[2px] pt-[3px]">
          <div className="flex-1 min-w-0"><OrderTable /></div>
          <div className="w-[6px] bg-[#f0f0f0]" />
        </div>
        <StatusBar>취소주문이 완료 되었습니다.</StatusBar>
      </section>
      <section className="flex flex-1 min-h-0 border-t border-t-black border-l-2 border-l-[#00a2ff] bg-[#b9c9e6] pl-[4px]">
        <div className="flex-1 bg-[#fdfdff]">
          <table className="w-full table-fixed border-collapse">
            <thead>
              <tr className="h-[19px] bg-[#d6e2f1]">
                <th className="p-0 w-[18px] border-r border-b border-[#bdbdbd]">
                  <input type="checkbox" aria-label="전체 선택" className="block mx-auto appearance-none w-3 h-3 bg-white border border-[#777]" />
                </th>
                {ORDER_COLS.map(([h, w]) => <th key={h} className={`p-0 font-normal border-r border-b border-[#bdbdbd] whitespace-nowrap ${w} leading-[18px]`}>{h}</th>)}
                <th className="p-0 border-b border-[#bdbdbd]" />
              </tr>
            </thead>
          </table>
        </div>
        <div className="w-[3px] bg-[#e6e6e6] border-r border-r-[#f00]" />
        <div className="w-px bg-[#f00]" />
      </section>
    </div>
  );
}

export default function App() {
  return (
    <main className="relative grid grid-cols-[567fr_381fr_554fr] h-screen overflow-hidden bg-[#415463] text-[13px] text-black font-['Liberation_Sans','Noto_Sans_CJK_KR',sans-serif]">
      <LeftColumn />
      <ChartWindow />
      <RightColumn />
      <HistoryWindow />
    </main>
  );
}
